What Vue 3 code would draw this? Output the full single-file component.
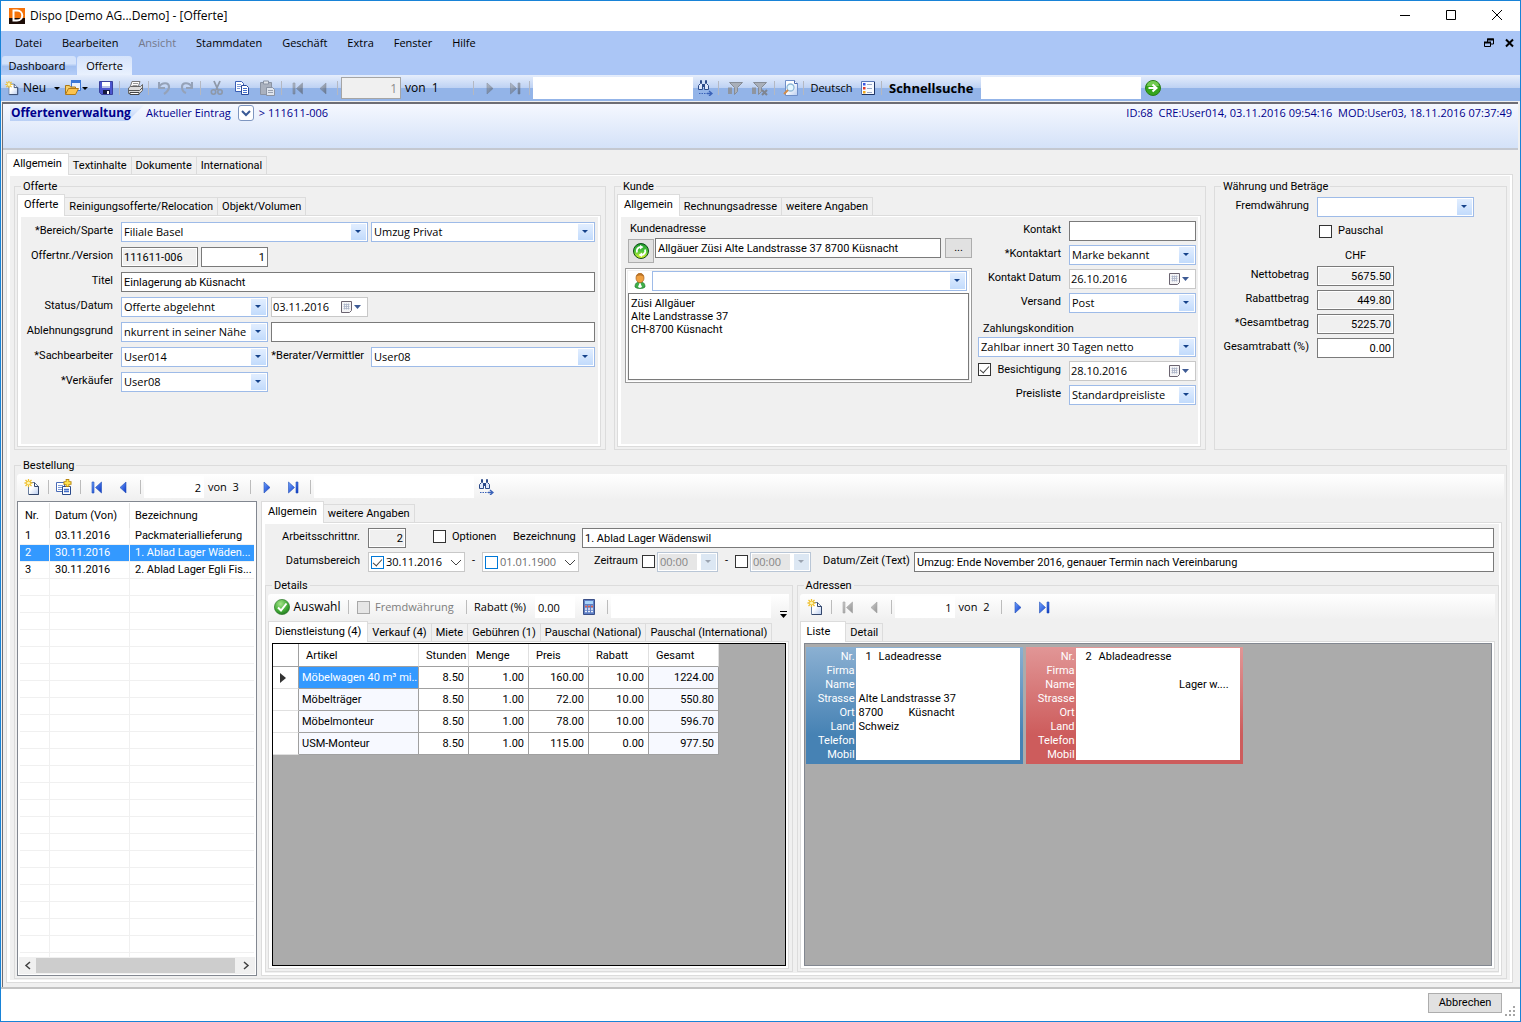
<script setup>
import { ref } from 'vue'

const menus = ['Datei', 'Bearbeiten', 'Ansicht', 'Stammdaten', 'Geschäft', 'Extra', 'Fenster', 'Hilfe']
const mainTabs = ['Allgemein', 'Textinhalte', 'Dokumente', 'International']
const offerTabs = ['Offerte', 'Reinigungsofferte/Relocation', 'Objekt/Volumen']
const customerTabs = ['Allgemein', 'Rechnungsadresse', 'weitere Angaben']
const orderTabs = ['Allgemein', 'weitere Angaben']
const detailTabs = ['Dienstleistung (4)', 'Verkauf (4)', 'Miete', 'Gebühren (1)', 'Pauschal (National)', 'Pauschal (International)']
const addressTabs = ['Liste', 'Detail']

const orders = [
  { nr: '1', date: '03.11.2016', name: 'Packmateriallieferung' },
  { nr: '2', date: '30.11.2016', name: '1. Ablad Lager Wäden...' },
  { nr: '3', date: '30.11.2016', name: '2. Ablad Lager Egli Fis...' },
]
const selectedOrder = ref('2')

const services = [
  ['Möbelwagen 40 m³ mi...', '8.50', '1.00', '160.00', '10.00', '1224.00'],
  ['Möbelträger', '8.50', '1.00', '72.00', '10.00', '550.80'],
  ['Möbelmonteur', '8.50', '1.00', '78.00', '10.00', '596.70'],
  ['USM-Monteur', '8.50', '1.00', '115.00', '0.00', '977.50'],
]

const amounts = [
  { id: 'netto', label: 'Nettobetrag', value: '5675.50', locked: true },
  { id: 'rabatt', label: 'Rabattbetrag', value: '449.80', locked: true },
  { id: 'gesamt', label: '*Gesamtbetrag', value: '5225.70', locked: true },
  { id: 'prozent', label: 'Gesamtrabatt (%)', value: '0.00', locked: false },
]

const addressLabels = ['Nr.', 'Firma', 'Name', 'Strasse', 'Ort', 'Land', 'Telefon', 'Mobil']
const addressText = 'Züsi Allgäuer\nAlte Landstrasse 37\nCH-8700 Küsnacht'
</script>

<template>
  <svg class="sprite" width="0" height="0" aria-hidden="true">
    <defs>
      <linearGradient id="g-page" x1="0" y1="0" x2="1" y2="1"><stop offset="0.4" stop-color="#fff" /><stop offset="1" stop-color="#b9cdf0" /></linearGradient>
      <linearGradient id="g-nav" x1="0" y1="0" x2="1" y2="1"><stop offset="0" stop-color="#6fa2ff" /><stop offset="1" stop-color="#0b35c4" /></linearGradient>
      <radialGradient id="g-green" cx="0.4" cy="0.3" r="0.8"><stop offset="0" stop-color="#a5e58a" /><stop offset="0.6" stop-color="#3fa834" /><stop offset="1" stop-color="#1d6b1c" /></radialGradient>
      <linearGradient id="g-lime" x1="0" y1="0" x2="0" y2="1"><stop offset="0" stop-color="#1d9a2e" /><stop offset="0.5" stop-color="#4cc43a" /><stop offset="1" stop-color="#e4f62a" /></linearGradient>
      <symbol id="i-new" viewBox="0 0 16 16">
        <path d="M4.500 3.500h6l4 4v8h-10z" fill="url(#g-page)" stroke="#6b7f9f" />
        <path d="M10.500 3.500v4h4v8H5" fill="none" stroke="#33466b" />
        <path d="M4.500 0v8M.5 4h8M1.500 1l6 6M7.500 1l-6 6" stroke="#f0c02c" stroke-width="1.300" />
        <circle cx="4.500" cy="4" r="1.600" fill="#fff7b0" />
      </symbol>
      <symbol id="i-open" viewBox="0 0 16 16">
        <path d="M6.500.5h9v10h-9z" fill="#eaf2ff" stroke="#3b78d8" /><path d="M6 0h10v3H6z" fill="#3b78d8" />
        <path d="M.5 14V5.500h4l1 1.500h5v3" fill="#f6cf6a" stroke="#a97616" />
        <path d="M.5 14.500l3-6h10l-3 6z" fill="#fbc34e" stroke="#b27a18" />
      </symbol>
      <symbol id="i-save" viewBox="0 0 16 16">
        <path d="M1.500 1.500h13v13h-11l-2-2z" fill="#4b55cf" stroke="#3a409c" />
        <path d="M4 2h8v6H4z" fill="#fff" /><path d="M4 6h8v2H4z" fill="#b9c2e6" />
        <path d="M5 10h7v4H5z" fill="#15183f" /><path d="M9 11h2v3H9z" fill="#fff" />
      </symbol>
      <symbol id="i-print" viewBox="0 0 16 16">
        <path d="M5 1.500h8l-2 6H3z" fill="#fff" stroke="#777" />
        <path d="M6 3.500h5M5.500 5.500h5" stroke="#999" />
        <path d="M1.500 8l2-1.500h10l2-2v6l-3 3h-11z" fill="#dcdcdc" stroke="#666" />
        <path d="M1.500 10.500h11l3-3" fill="none" stroke="#555" /><path d="M3 12.500h9v2H3z" fill="#fff" stroke="#444" />
      </symbol>
      <symbol id="i-undo" viewBox="0 0 16 16">
        <path d="M3 2v6h6" fill="none" stroke="#95a2b8" stroke-width="2" /><path d="M3 7c3-5 10-5 10 0 0 3-2 5-5 7" fill="none" stroke="#95a2b8" stroke-width="2.200" />
      </symbol>
      <symbol id="i-redo" viewBox="0 0 16 16">
        <path d="M13 2v6H7" fill="none" stroke="#95a2b8" stroke-width="2" /><path d="M13 7C10 2 3 2 3 7c0 3 1 5 4 6" fill="none" stroke="#95a2b8" stroke-width="2.200" />
      </symbol>
      <symbol id="i-cut" viewBox="0 0 16 16">
        <path d="M5 1l4 9M11 1L7 10" stroke="#8e98a8" stroke-width="1.800" fill="none" />
        <circle cx="4.500" cy="12" r="2.200" fill="none" stroke="#8e98a8" stroke-width="1.600" /><circle cx="11" cy="12" r="2.200" fill="none" stroke="#8e98a8" stroke-width="1.600" />
      </symbol>
      <symbol id="i-copy" viewBox="0 0 16 16">
        <path d="M1.500 1.500h6l2 2v8h-8z" fill="#fff" stroke="#3a5fb5" /><path d="M3 4.500h4M3 6.500h4M3 8.500h3" stroke="#7e9bd8" />
        <path d="M7.500 5.500h5l2 2v7h-7z" fill="#fff" stroke="#2a4a9b" /><path d="M9 8.500h4M9 10.500h4M9 12.500h4" stroke="#4470cc" />
      </symbol>
      <symbol id="i-paste" viewBox="0 0 16 16">
        <path d="M1.500 2.500h11v12h-11z" fill="#aab1be" stroke="#8a93a3" /><path d="M4.500 1h5v3h-5z" fill="#e0e4ea" stroke="#8a93a3" />
        <path d="M7.500 7.500h6l2 2v6h-8z" fill="#dfe5ee" stroke="#8a93a3" /><path d="M9 10.500h5M9 12.500h5" stroke="#98a1b1" />
      </symbol>
      <symbol id="i-copyadd" viewBox="0 0 16 16">
        <path d="M.5 3.500h8v9h-8z" fill="#fff" stroke="#4a6cb8" /><path d="M2 6.500h5M2 8.500h5M2 10.500h5" stroke="#7e9bd8" />
        <path d="M6.500 7.500h8v8h-8z" fill="#fff" stroke="#2a4a8b" /><path d="M8 10.500h5M8 12.500h5" stroke="#4470cc" stroke-width="1.500" />
        <path d="M11.500 0v8M7.500 4h8" stroke="#b8860b" stroke-width="3.600" /><path d="M11.500 1v6M8.500 4h6" stroke="#ffe14d" stroke-width="2" />
      </symbol>
      <symbol id="i-first" viewBox="0 0 16 16"><path d="M3 3h2v11H3zM12.500 3v11L6.500 8.500z" fill="url(#g-nav)" stroke="#2450b8" stroke-width=".6" /></symbol>
      <symbol id="i-prev" viewBox="0 0 16 16"><path d="M11 3v11L5 8.500z" fill="url(#g-nav)" stroke="#2450b8" stroke-width=".6" /></symbol>
      <symbol id="i-next" viewBox="0 0 16 16"><path d="M5 3v11l6-5.500z" fill="url(#g-nav)" stroke="#2450b8" stroke-width=".6" /></symbol>
      <symbol id="i-last" viewBox="0 0 16 16"><path d="M3.500 3v11l6-5.500zM11 3h2v11h-2z" fill="url(#g-nav)" stroke="#2450b8" stroke-width=".6" /></symbol>
      <symbol id="i-find" viewBox="0 0 16 16">
        <path d="M3.500.5h1v3l1 1v5h-4v-4l2-2zM8.500.5h1v3l2 2v4h-4v-5l1-1z" fill="#dfe8fb" stroke="#2c4a88" />
        <path d="M5 4h3v3H5z" fill="#2c4a88" /><path d="M2 13.500h8" stroke="#3a62b8" stroke-width="1.200" stroke-dasharray="1.500 1" /><path d="M10 13.500h5M12 11l3 2.500-3 2.500" fill="none" stroke="#3a62b8" stroke-width="1.400" />
      </symbol>
      <symbol id="i-filter" viewBox="0 0 16 16">
        <path d="M2.500 2.500h13l-5 5v4l-3 3V7.500z" fill="#a9afb9" stroke="#868c96" /><path d="M1 7.500h4V14H1z" fill="#8f959f" />
      </symbol>
      <symbol id="i-filterx" viewBox="0 0 16 16">
        <path d="M1.500 2.500h13l-5 5v4l-3 3V7.500z" fill="#a9afb9" stroke="#868c96" /><path d="M0 7.500h4V14H0z" fill="#8f959f" /><path d="M10 10l5 5M15 10l-5 5" stroke="#7f8590" stroke-width="2" />
      </symbol>
      <symbol id="i-preview" viewBox="0 0 16 16">
        <path d="M3.500.5h9l3 3v12h-12z" fill="url(#g-page)" stroke="#6f8fc8" /><path d="M12.500.5v3h3" fill="#fff" stroke="#4a6ab0" />
        <circle cx="8.500" cy="7.500" r="3.500" fill="#e5f7ff" stroke="#8fb8d8" stroke-width="1.300" /><path d="M6 10l-4 4" stroke="#d08b4a" stroke-width="2" />
      </symbol>
      <symbol id="i-list" viewBox="0 0 16 16">
        <path d="M1.500 1.500h13v13h-13z" fill="#f7faff" stroke="#5b78b8" /><path d="M14.500 2v12.500H2" fill="none" stroke="#1f3566" />
        <path d="M3 3h2.500v2.500H3z" fill="#3b55e0" /><path d="M3 7h2.500v2.500H3z" fill="#e03b2a" /><path d="M3 11h2.500v2.500H3z" fill="#f0a81c" />
        <path d="M7 4.500h5M7 8.500h5M7 12.500h5" stroke="#9aa9c8" />
      </symbol>
      <symbol id="i-go" viewBox="0 0 16 16">
        <circle cx="8" cy="8" r="7.500" fill="#35a51c" stroke="#2a7d18" /><path d="M2 6a6 5 0 0 1 12 0z" fill="#8fdc6a" opacity=".7" />
        <path d="M3.500 8h7M7.500 4.500L11.500 8l-4 3.500" fill="none" stroke="#fff" stroke-width="2" />
      </symbol>
      <symbol id="i-refresh" viewBox="0 0 16 16">
        <circle cx="8" cy="8" r="7.500" fill="url(#g-lime)" stroke="#0d4d18" />
        <path d="M4 9.500c-1-3 1-5.500 4-5.500M12 6.500c1 3-1 5.500-4 5.500" fill="none" stroke="#fff" stroke-width="1.800" /><path d="M7 2l3.500 2L7 6.500zM9 9.500L5.500 12 9 14z" fill="#fff" />
      </symbol>
      <symbol id="i-person" viewBox="0 0 16 16">
        <path d="M3 14c0-4 2-5 5-5s5 1 5 5c-2 2-8 2-10 0z" fill="#3fae49" stroke="#1e7a2b" stroke-width=".7" />
        <path d="M8 9l2 5-2 1-2-1z" fill="#fff" /><ellipse cx="8" cy="5" rx="4" ry="4.700" fill="#f0a040" stroke="#a8601c" stroke-width=".7" /><path d="M4 4c0-5 8-5 8 0-2-2-6-2-8 0z" fill="#b8742a" />
      </symbol>
      <symbol id="i-ok" viewBox="0 0 16 16">
        <circle cx="8" cy="8" r="7.600" fill="url(#g-green)" stroke="#2f7a2c" stroke-width=".7" /><path d="M4 8.500l3 3 5.500-7" fill="none" stroke="#fff" stroke-width="2" />
      </symbol>
      <symbol id="i-calc" viewBox="0 0 16 16">
        <path d="M2.500.5h11v15h-11z" fill="#5f7fc4" stroke="#3a4f88" /><path d="M4 2h8v3H4z" fill="#a8d4fa" />
        <path d="M4 7.500h8M4 10h8M4 12.500h8" stroke="#e8eefb" stroke-width="1.600" stroke-dasharray="2 1" /><path d="M4 7.500h8" stroke="#e0604a" stroke-width="1.600" stroke-dasharray="2 1" />
      </symbol>
      <symbol id="i-calendar" viewBox="0 0 20 14">
        <path d="M.5.500h10v9l-2 2h-8z" fill="#f4f4f6" stroke="#6b6470" /><path d="M2.500 3.500h6M2.500 5.500h6M2.500 7.500h6M3.500 2.500v6M5.500 2.500v6M7.500 2.500v6" stroke="#a9b3c6" stroke-width=".8" />
        <path d="M13 4h7l-3.500 4z" fill="#3d5a94" />
      </symbol>
    </defs>
  </svg>

  <div class="window">
    <header class="titlebar">
      <svg class="logo" width="16" height="16" viewBox="0 0 16 16" aria-hidden="true">
        <path d="M0 0h16v10H0z" fill="#f5730a" /><path d="M0 10h16v6H0z" fill="#1c0c06" />
        <path d="M4.500 2.500h3.500c7 0 7 10 0 10H4.500z" fill="none" stroke="#fff" stroke-width="2" />
      </svg>
      <h1>Dispo [Demo AG...Demo] - [Offerte]</h1>
      <div class="winbtns">
        <button aria-label="Minimieren"><svg width="12" height="12"><path d="M1 5.500h10" stroke="#000" /></svg></button>
        <button aria-label="Maximieren"><svg width="12" height="12"><path d="M1.500.5h9v9h-9z" fill="none" stroke="#000" /></svg></button>
        <button aria-label="Schliessen"><svg width="12" height="12"><path d="M1 0l10 10M11 0L1 10" stroke="#000" /></svg></button>
      </div>
    </header>

    <nav class="menubar">
      <button v-for="m in menus" :key="m" :disabled="m === 'Ansicht'">{{ m }}</button>
      <div class="mdi">
        <button aria-label="Wiederherstellen"><svg width="10" height="10"><path d="M3.500 4V1h6v5H7M.5 4.500h6v4h-6z" fill="none" stroke="#000" /><path d="M3 1.500h7M0 4.500h7" stroke="#000" stroke-width="2" /></svg></button>
        <button aria-label="Fenster schliessen"><svg width="10" height="10"><path d="M1 1.500l7 7M8 1.500l-7 7" stroke="#000" stroke-width="2" /></svg></button>
      </div>
    </nav>

    <div class="doctabs">
      <button>Dashboard</button><button class="on">Offerte</button>
    </div>

    <div class="toolbar main">
      <button class="new"><svg class="ico"><use href="#i-new" /></svg><span>Neu</span><i class="caret"></i></button>
      <button class="open" aria-label="Öffnen"><svg class="ico"><use href="#i-open" /></svg><i class="caret"></i></button>
      <button class="tb" aria-label="Speichern"><svg class="ico"><use href="#i-save" /></svg></button><i class="sep"></i>
      <button class="tb" aria-label="Drucken"><svg class="ico"><use href="#i-print" /></svg></button><i class="sep"></i>
      <button class="tb" aria-label="Rückgängig" disabled><svg class="ico"><use href="#i-undo" /></svg></button>
      <button class="tb" aria-label="Wiederholen" disabled><svg class="ico"><use href="#i-redo" /></svg></button><i class="sep"></i>
      <button class="nav" aria-label="Ausschneiden" disabled><svg class="ico"><use href="#i-cut" /></svg></button>
      <button class="nav" aria-label="Kopieren"><svg class="ico"><use href="#i-copy" /></svg></button>
      <button class="nav" aria-label="Einfügen" disabled><svg class="ico"><use href="#i-paste" /></svg></button><i class="sep"></i>
      <button class="nav off" aria-label="Erster" disabled><svg class="ico"><use href="#i-first" /></svg></button>
      <button class="nav off" aria-label="Zurück" disabled><svg class="ico"><use href="#i-prev" /></svg></button><i class="sep"></i>
      <input class="pos locked" value="1" aria-label="Position" disabled><span class="of">von&nbsp; 1</span><i class="sep"></i>
      <button class="nav off" aria-label="Weiter" disabled><svg class="ico"><use href="#i-next" /></svg></button>
      <button class="nav off" aria-label="Letzter" disabled><svg class="ico"><use href="#i-last" /></svg></button><i class="sep"></i>
      <input class="search" aria-label="Suchtext">
      <button class="tb" aria-label="Suchen"><svg class="ico"><use href="#i-find" /></svg></button><i class="sep"></i>
      <button class="nav" aria-label="Filter" disabled><svg class="ico"><use href="#i-filter" /></svg></button>
      <button class="nav" aria-label="Filter entfernen" disabled><svg class="ico"><use href="#i-filterx" /></svg></button><i class="sep"></i>
      <button class="tb" aria-label="Vorschau"><svg class="ico"><use href="#i-preview" /></svg></button><i class="sep"></i>
      <button class="lang">Deutsch</button>
      <button class="tb" aria-label="Liste"><svg class="ico"><use href="#i-list" /></svg></button><i class="sep"></i>
      <label class="quick" for="quick">Schnellsuche</label>
      <input id="quick" class="search">
      <button class="tb" aria-label="Los"><svg class="ico"><use href="#i-go" /></svg></button>
    </div>

    <main class="child">
      <div class="crumbs">
        <h2>Offertenverwaltung</h2>
        <span>Aktueller Eintrag</span>
        <button aria-label="Eintrag wählen"><svg width="10" height="8"><path d="M1 2l4 4 4-4" fill="none" stroke="#3a5a96" stroke-width="2" /></svg></button>
        <span>&gt;&nbsp;111611-006</span>
        <span class="meta">ID:68&nbsp; CRE:User014, 03.11.2016 09:54:16&nbsp; MOD:User03, 18.11.2016 07:37:49</span>
      </div>

      <section class="outer">
        <div class="tabs"><button v-for="(t, i) in mainTabs" :key="t" :class="{ on: i === 0 }">{{ t }}</button></div>
        <div class="page"><div class="pane body">
          <div class="groups">
            <fieldset>
              <legend>Offerte</legend>
              <div class="tabctl">
                <div class="tabs"><button v-for="(t, i) in offerTabs" :key="t" :class="{ on: i === 0 }">{{ t }}</button></div>
                <div class="page"><div class="pane offer">
                  <div class="row"><label for="bereich">*Bereich/Sparte</label><span class="combo c247"><select id="bereich"><option>Filiale Basel</option></select></span><span class="combo grow"><select aria-label="Sparte"><option>Umzug Privat</option></select></span></div>
                  <div class="row"><label for="offertnr">Offertnr./Version</label><input id="offertnr" class="txt locked c77" value="111611-006" readonly><input class="txt num c67" value="1" aria-label="Version"></div>
                  <div class="row"><label for="titel">Titel</label><input id="titel" class="txt grow" value="Einlagerung ab Küsnacht"></div>
                  <div class="row"><label for="status">Status/Datum</label><span class="combo c147"><select id="status"><option>Offerte abgelehnt</option></select></span><span class="date c97"><input value="03.11.2016" aria-label="Datum"><svg width="20" height="14"><use href="#i-calendar" /></svg></span></div>
                  <div class="row"><label for="grund">Ablehnungsgrund</label><span class="combo c147"><select id="grund"><option>nkurrent in seiner Nähe</option></select></span><input class="txt grow" aria-label="Grund Text"></div>
                  <div class="row"><label for="sach">*Sachbearbeiter</label><span class="combo c147"><select id="sach"><option>User014</option></select></span><label class="second" for="berater">*Berater/Vermittler</label><span class="combo grow"><select id="berater"><option>User08</option></select></span></div>
                  <div class="row"><label for="verk">*Verkäufer</label><span class="combo c147"><select id="verk"><option>User08</option></select></span></div>
                </div></div>
              </div>
            </fieldset>

            <fieldset>
              <legend>Kunde</legend>
              <div class="tabctl">
                <div class="tabs"><button v-for="(t, i) in customerTabs" :key="t" :class="{ on: i === 0 }">{{ t }}</button></div>
                <div class="page"><div class="pane customer">
                  <div class="address">
                    <label for="kadr">Kundenadresse</label>
                    <div class="adrline">
                      <button class="push refresh" aria-label="Aktualisieren"><svg class="ico"><use href="#i-refresh" /></svg></button>
                      <input id="kadr" class="txt grow" value="Allgäuer Züsi Alte Landstrasse 37 8700 Küsnacht">
                      <button class="push dots">...</button>
                    </div>
                    <div class="adrbox">
                      <div class="adrpick"><svg class="ico"><use href="#i-person" /></svg><span class="combo grow"><select aria-label="Person"><option></option></select></span></div>
                      <textarea aria-label="Adresse" :value="addressText"></textarea>
                    </div>
                  </div>
                  <div class="contact">
                    <div class="row"><label for="kontakt">Kontakt</label><input id="kontakt" class="txt c127"></div>
                    <div class="row"><label for="kart">*Kontaktart</label><span class="combo c127"><select id="kart"><option>Marke bekannt</option></select></span></div>
                    <div class="row"><label for="kdat">Kontakt Datum</label><span class="date c127"><input id="kdat" value="26.10.2016"><svg width="20" height="14"><use href="#i-calendar" /></svg></span></div>
                    <div class="row"><label for="vers">Versand</label><span class="combo c127"><select id="vers"><option>Post</option></select></span></div>
                    <div class="terms"><label for="zahl">Zahlungskondition</label><span class="combo"><select id="zahl"><option>Zahlbar innert 30 Tagen netto</option></select></span></div>
                    <div class="row"><label class="check"><input type="checkbox" checked>Besichtigung</label><span class="date c127"><input value="28.10.2016" aria-label="Besichtigung Datum"><svg width="20" height="14"><use href="#i-calendar" /></svg></span></div>
                    <div class="row"><label for="preis">Preisliste</label><span class="combo c127"><select id="preis"><option>Standardpreisliste</option></select></span></div>
                  </div>
                </div></div>
              </div>
            </fieldset>

            <fieldset>
              <legend>Währung und Beträge</legend>
              <div class="money">
                <div class="row"><label for="fw">Fremdwährung</label><span class="combo c157"><select id="fw"><option></option></select></span></div>
                <label class="check flat"><input type="checkbox">Pauschal</label>
                <div class="chf">CHF</div>
                <div v-for="a in amounts" :key="a.id" class="row"><label :for="a.id">{{ a.label }}</label><input :id="a.id" class="txt num c77" :class="{ locked: a.locked }" :value="a.value" :readonly="a.locked"></div>
              </div>
            </fieldset>
          </div>

          <fieldset class="orders">
            <legend>Bestellung</legend>
            <div class="toolbar light">
              <button class="tb" aria-label="Neu"><svg class="ico"><use href="#i-new" /></svg></button><i class="sep"></i>
              <button class="tb" aria-label="Kopie anlegen"><svg class="ico"><use href="#i-copyadd" /></svg></button><i class="sep"></i>
              <button class="nav" aria-label="Erste"><svg class="ico"><use href="#i-first" /></svg></button>
              <button class="nav" aria-label="Vorige"><svg class="ico"><use href="#i-prev" /></svg></button><i class="sep"></i>
              <input class="pos" value="2" aria-label="Position"><span class="of">von&nbsp; 3</span><i class="sep"></i>
              <button class="nav" aria-label="Nächste"><svg class="ico"><use href="#i-next" /></svg></button>
              <button class="nav" aria-label="Letzte"><svg class="ico"><use href="#i-last" /></svg></button><i class="sep"></i>
              <input class="search" aria-label="Suchtext">
              <button class="tb" aria-label="Suchen"><svg class="ico"><use href="#i-find" /></svg></button>
            </div>

            <div class="split">
              <div class="list">
                <div class="listbody">
                  <table>
                    <thead><tr><th>Nr.</th><th>Datum (Von)</th><th>Bezeichnung</th></tr></thead>
                    <tbody>
                      <tr v-for="o in orders" :key="o.nr" :class="{ sel: o.nr === selectedOrder }" @click="selectedOrder = o.nr"><td>{{ o.nr }}</td><td>{{ o.date }}</td><td>{{ o.name }}</td></tr>
                    </tbody>
                  </table>
                  <div class="fill"><i></i><i></i><i></i></div>
                </div>
                <div class="hscroll">
                  <svg width="17" height="17"><path d="M11 5L7 8.500l4 3.500" fill="none" stroke="#404040" stroke-width="1.500" /></svg><i></i><svg width="17" height="17"><path d="M6 5l4 3.500L6 12" fill="none" stroke="#404040" stroke-width="1.500" /></svg>
                </div>
              </div>

              <div class="tabctl">
                <div class="tabs"><button v-for="(t, i) in orderTabs" :key="t" :class="{ on: i === 0 }">{{ t }}</button></div>
                <div class="page"><div class="pane step">
                  <div class="row first">
                    <label for="anr">Arbeitsschrittnr.</label><input id="anr" class="txt num locked c37" value="2" readonly>
                    <label class="check opt"><input type="checkbox">Optionen</label>
                    <label class="inline" for="bez">Bezeichnung</label><input id="bez" class="txt grow" value="1. Ablad Lager Wädenswil">
                  </div>
                  <div class="row">
                    <label for="dvon">Datumsbereich</label>
                    <span class="date win c97"><input type="checkbox" checked aria-label="Von aktiv"><input id="dvon" value="30.11.2016"><svg width="12" height="8"><path d="M1 1l5 5 5-5" fill="none" stroke="#444" /></svg></span>
                    <span class="dash">-</span>
                    <span class="date win c97 dim"><input type="checkbox" aria-label="Bis aktiv"><input value="01.01.1900" aria-label="Bis"><svg width="12" height="8"><path d="M1 1l5 5 5-5" fill="none" stroke="#444" /></svg></span>
                    <span class="lbl period">Zeitraum</span>
                    <input type="checkbox" aria-label="Zeit von aktiv"><span class="combo time"><select disabled aria-label="Zeit von"><option>00:00</option></select></span>
                    <span class="dash">-</span>
                    <input type="checkbox" aria-label="Zeit bis aktiv"><span class="combo time"><select disabled aria-label="Zeit bis"><option>00:00</option></select></span>
                    <label class="inline2" for="dzt">Datum/Zeit (Text)</label><input id="dzt" class="txt grow" value="Umzug: Ende November 2016, genauer Termin nach Vereinbarung">
                  </div>

                  <div class="lower">
                    <fieldset>
                      <legend>Details</legend>
                      <div class="toolbar light details">
                        <button class="auswahl"><svg class="ico"><use href="#i-ok" /></svg>Auswahl</button><i class="sep"></i>
                        <label class="fw"><input type="checkbox" disabled>Fremdwährung</label><i class="sep"></i>
                        <label class="rab" for="rab">Rabatt (%)</label><input id="rab" class="rabin" value="0.00">
                        <button class="tb" aria-label="Rechner"><svg class="ico"><use href="#i-calc" /></svg></button><i class="sep"></i>
                        <input class="search" aria-label="Artikelsuche">
                        <button class="more" aria-label="Weitere Optionen"><svg width="9" height="9"><path d="M1 1.500h7" stroke="#000" /><path d="M1 4h7L4.500 8z" /></svg></button>
                      </div>
                      <div class="tabctl">
                        <div class="tabs"><button v-for="(t, i) in detailTabs" :key="t" :class="{ on: i === 0 }">{{ t }}</button></div>
                        <div class="page"><div class="grid black">
                          <table class="data">
                            <thead><tr><th class="rh"></th><th class="art">Artikel</th><th class="std">Stunden</th><th>Menge</th><th>Preis</th><th>Rabatt</th><th class="sum">Gesamt</th></tr></thead>
                            <tbody>
                              <tr v-for="(s, r) in services" :key="s[0]">
                                <td class="rh"><svg v-if="r === 0" width="6" height="10"><path d="M0 0l6 5-6 5z" fill="#333" /></svg></td>
                                <td v-for="(v, c) in s" :key="c" :class="{ art: c === 0, sum: c === 5, cur: r === 0 && c === 0 }">{{ v }}</td>
                              </tr>
                            </tbody>
                          </table>
                        </div></div>
                      </div>
                    </fieldset>

                    <fieldset>
                      <legend>Adressen</legend>
                      <div class="toolbar light">
                        <button class="tb" aria-label="Neu"><svg class="ico"><use href="#i-new" /></svg></button><i class="sep"></i>
                        <button class="nav off" aria-label="Erste" disabled><svg class="ico"><use href="#i-first" /></svg></button>
                        <button class="nav off" aria-label="Vorige" disabled><svg class="ico"><use href="#i-prev" /></svg></button><i class="sep"></i>
                        <input class="pos" value="1" aria-label="Position"><span class="of">von&nbsp; 2</span><i class="sep"></i>
                        <button class="nav" aria-label="Nächste"><svg class="ico"><use href="#i-next" /></svg></button>
                        <button class="nav" aria-label="Letzte"><svg class="ico"><use href="#i-last" /></svg></button>
                      </div>
                      <div class="tabctl">
                        <div class="tabs"><button v-for="(t, i) in addressTabs" :key="t" :class="{ on: i === 0, wide: i === 0 }">{{ t }}</button></div>
                        <div class="page"><div class="grid cards">
                          <article class="card blue">
                            <ul><li v-for="l in addressLabels" :key="l">{{ l }}</li></ul>
                            <div class="cardbody">
                              <p class="kind"><b>1</b>Ladeadresse</p><p></p><p></p><p>Alte Landstrasse 37</p><p class="city"><b>8700</b>Küsnacht</p><p>Schweiz</p>
                            </div>
                          </article>
                          <article class="card red">
                            <ul><li v-for="l in addressLabels" :key="l">{{ l }}</li></ul>
                            <div class="cardbody">
                              <p class="kind"><b>2</b>Abladeadresse</p><p></p><p class="end">Lager w....</p>
                            </div>
                          </article>
                        </div></div>
                      </div>
                    </fieldset>
                  </div>
                </div></div>
              </div>
            </div>
          </fieldset>
        </div></div>
      </section>
    </main>

    <footer class="footer">
      <button class="push cancel">Abbrechen</button>
      <svg width="11" height="11" aria-hidden="true"><path d="M8 0h2v2H8zM4 4h2v2H4zM8 4h2v2H8zM0 8h2v2H0zM4 8h2v2H4zM8 8h2v2H8z" fill="#a5a5a5" /></svg>
    </footer>
  </div>
</template>

<style>
body { background: #f0f0f0; }
</style>

<style scoped>
.window {
  --ui: Roboto, "Liberation Sans", sans-serif;
  --sys: "Open Sans", "Noto Sans", sans-serif;
  --line: #dcdcdc;
  --edge: #7a7a7a;
  display: flex; flex-direction: column; min-height: 100vh;
  border: 1px solid #1883d7; background: #f0f0f0; color: #000;
  font: 11px/16px var(--ui);
}
.window, .window * { box-sizing: border-box; }
.sprite { position: absolute; }
button, input, select, textarea { font: inherit; color: inherit; margin: 0; padding: 0; border: 0; border-radius: 0; background: none; outline: 0; }
input { min-width: 0; }
h1, h2, p, ul { margin: 0; padding: 0; font: inherit; list-style: none; }
svg { display: block; flex: none; }
.ico { width: 16px; height: 16px; }
.grow { flex: 1; }

.titlebar { display: flex; align-items: center; height: 30px; padding-left: 8px; background: #fff; font: 12px/16px var(--sys); }
.titlebar h1 { margin-left: 5px; }
.winbtns { display: flex; margin-left: auto; }
.winbtns button { display: grid; place-items: center; width: 46px; height: 28px; }
.menubar { display: flex; align-items: center; height: 25px; padding: 0 0 2px 4px; background: #abc6f6; font: 11px/16px var(--sys); }
.menubar button { padding: 0 10px; }
.menubar button:disabled { color: #75798a; }
.mdi { display: flex; margin-left: auto; padding-right: 5px; gap: 11px; }
.mdi button { padding: 0; }
.doctabs { display: flex; gap: 1px; height: 19px; padding-left: 1px; background: #abc6f6; font: 11px/17px var(--sys); }
.doctabs button { width: 74px; padding-right: 4px; border-radius: 3px 3px 0 0; background: linear-gradient(#d3e2fb 0 40%, #a3c0f0 55%, #b4cdf8); }
.doctabs button.on { width: 55px; padding: 0; background: linear-gradient(#d5e3fb, #e9f1fe); }

.toolbar { display: flex; align-items: center; height: 26px; }
.toolbar > * { flex: none; }
.toolbar button { display: flex; align-items: center; justify-content: center; height: 22px; }
.toolbar.main { padding-left: 4px; background: linear-gradient(#e6eefc, #bdd1f3 50%, #93b4e8 51%, #93b4e8); font: 12px/16px var(--sys); }
.tb { width: 24px; }
.nav { width: 25px; }
.light .nav { width: 26px; }
.nav.off .ico { filter: grayscale(1) opacity(0.5); }
.sep { width: 1px; height: 14px; margin: 0 3px 0 2px; background: #b4b8c2; }
.light .sep { margin: 0 3px 0 4px; background: #bcbcbc; }
.caret { border: 3px solid transparent; border-top: 3px solid #000; border-bottom: 0; }
.toolbar .new { gap: 4px; width: 55px; }
.toolbar .new .ico { width: 14px; }
.toolbar .new .caret { margin-left: 4px; }
.toolbar .open { width: 32px; gap: 1px; justify-content: flex-start; margin-left: 2px; padding-left: 3px; }
.toolbar.main .tb { width: 23px; }
.pos, .search { height: 22px; background: #fff; font: 12px/16px var(--sys); }
.pos { width: 60px; padding-right: 3px; text-align: right; }
.pos.locked { border: 1px solid #a5a5a5; color: #8d8d8d; }
.search { width: 160px; }
.of { width: 70px; padding-left: 4px; }
.light .of { width: 42px; }
.lang { width: 49px; font: 11px/16px var(--sys); }
.quick { width: 96px; padding-left: 4px; font: bold 13px/16px var(--sys); }
.light { padding-left: 3px; border-radius: 3px 0 0; background: linear-gradient(#fff, #f0f0f0); font: 11px/16px var(--sys); }
.light .pos { font-size: 11px; }

.child { display: flex; flex: 1; flex-direction: column; border-top: 2px solid #6d6d75; border-left: 1px solid #6d6d75; margin: 1px 2px 0 1px; }
.crumbs { display: flex; align-items: flex-start; height: 46px; padding: 1px 6px 0 7px; border-bottom: 2px solid #c4c8d0; background: linear-gradient(#f5f8ff, #d4e2f8); color: #00008b; font: 11px/16px var(--sys); }
.crumbs h2 { width: 134px; padding-left: 1px; background: linear-gradient(#eef4ff, #b9cff5); clip-path: polygon(0 0, 100% 0, 88% 100%, 0 100%); font: bold 12px/16px var(--sys); }
.crumbs span { margin-left: 2px; }
.crumbs button { display: grid; place-items: center; width: 16px; height: 16px; margin: 0 3px 0 7px; border: 1px solid #7e96c0; border-radius: 3px; background: #fff; }
.crumbs .meta { margin-left: auto; }

.outer { display: flex; flex: 1; flex-direction: column; margin: 3px 5px 4px 3px; }
.tabctl { display: flex; flex: 1; flex-direction: column; min-width: 0; }
.tabs { display: flex; align-items: flex-end; height: 21px; }
.tabs button { flex: none; height: 18px; padding: 0 4px; border: 1px solid var(--line); border-width: 1px 1px 0 0; background: #f0f0f0; line-height: 18px; white-space: nowrap; }
.tabs button.on { z-index: 1; height: 22px; margin-bottom: -1px; padding: 0 6px 1px; border-left-width: 1px; background: #fff; }
.tabs button.wide { padding-right: 15px; }
.page { display: flex; flex: 1; padding: 1px 2px 2px 3px; border: 1px solid var(--line); background: #fff; }
.pane { flex: 1; min-width: 0; background: #f0f0f0; }
.body { display: flex; flex-direction: column; padding: 2px 3px 1px 4px; }

fieldset { display: flex; flex-direction: column; min-width: 0; margin: 0; padding: 0 4px 2px 2px; border: 1px solid var(--line); }
legend { margin-left: 4px; padding: 1px 2px 0; line-height: 15px; }
.groups { display: grid; grid-template-columns: 592fr 592fr 293fr; gap: 8px; height: 272px; }
.row { display: flex; gap: 3px; height: 20px; }
.row > * { flex: none; }
.row > .grow { flex: 1; }
.row > label, .lbl { line-height: 18px; white-space: nowrap; }
.row > label:first-child { margin-right: 5px; text-align: right; }

.txt { height: 20px; padding: 0 2px; border: 1px solid var(--edge); background: #fff; }
.locked, .txt.locked { background: #f0f0f0; }
.txt.locked { box-shadow: inset 0 0 0 1px #fff; }
.num { text-align: right; }
.combo { position: relative; display: block; height: 20px; border: 1px solid #9ebbe8; background: #fff; }
.combo select { display: block; width: 100%; height: 18px; padding: 0 18px 0 2px; appearance: none; font: 11px/16px var(--sys); }
.combo::before { content: ""; position: absolute; top: 1px; right: 1px; width: 15px; height: 16px; background: linear-gradient(#e2eeff, #c2dbfc); pointer-events: none; }
.combo::after { content: ""; position: absolute; top: 7px; right: 6px; border: 3px solid transparent; border-top-color: #15428b; border-bottom: 0; pointer-events: none; }
.date { display: flex; align-items: center; height: 20px; padding-right: 6px; border: 1px solid #c8c8c8; background: #fff; }
.date input { flex: 1; width: 0; padding-left: 1px; font: 11px/16px var(--sys); }
.date svg { margin-top: 2px; }
.c247 { width: 247px; } .c157 { width: 157px; } .c147 { width: 147px; } .c127 { width: 127px; }
.c97 { width: 97px; } .c77 { width: 77px; } .c67 { width: 67px; } .c37 { width: 38px; }

input[type="checkbox"] { position: relative; flex: none; width: 13px; height: 13px; border: 1px solid #333; background: #fff; appearance: none; }
input[type="checkbox"]:checked::after { content: ""; position: absolute; left: 3px; top: 0; width: 4px; height: 8px; border: solid #444; border-width: 0 1px 1px 0; transform: rotate(42deg); }

.offer { display: flex; flex-direction: column; gap: 5px; padding: 5px 3px 0 0; }
.offer .row > label:first-child { width: 92px; }
.offer .row .second { width: 97px; padding-right: 4px; text-align: right; }

.customer { display: flex; padding: 4px 2px 0 4px; }
.address { flex: 1; display: flex; flex-direction: column; }
.address > label { padding-left: 5px; }
.adrline { display: flex; height: 27px; padding: 1px 0 0 3px; }
.push { border: 1px solid #adadad; background: #e1e1e1; }
.refresh { display: grid; place-items: center; width: 26px; height: 24px; margin: 1px 1px 0 0; }
.dots { width: 27px; height: 20px; margin-left: 4px; }
.adrbox { display: flex; flex-direction: column; height: 115px; margin-top: 4px; padding: 2px; border: 1px solid #9a9a9a; background: #f0f0f0; box-shadow: inset 0 0 0 1px #fff; }
.adrpick { display: flex; align-items: center; gap: 4px; padding: 0 2px 2px 4px; background: #fff; }
.address textarea { flex: 1; padding: 3px 2px; border: 1px solid var(--edge); background: #fff; line-height: 13px; resize: none; }
.contact { display: flex; flex-direction: column; gap: 4px; width: 218px; margin-left: 6px; }
.contact .row { justify-content: flex-end; }
.terms { margin-top: 4px; }
.terms label { display: block; padding-left: 5px; }
.check { display: flex; align-items: flex-start; gap: 6px; }
.check input { margin-top: 2px; }
.contact .row .check { flex: 1; padding-left: 4px; }

.money { display: flex; flex-direction: column; gap: 4px; padding-top: 3px; }
.money .row > label:first-child { width: 92px; }
.flat { padding: 2px 0 0 102px; }
.chf { padding: 7px 0 0 128px; line-height: 12px; }

.orders { flex: 1; margin-top: 7px; padding: 0 2px 2px; }
.orders > .toolbar { margin: 1px 0; }
.split { display: flex; flex: 1; gap: 4px; padding-right: 2px; }
.list { display: flex; flex-direction: column; width: 240px; border: 1px solid #828790; background: #fff; padding: 1px; }
.listbody { display: flex; flex: 1; flex-direction: column; padding: 0 1px; overflow: hidden; }
table { border-collapse: separate; border-spacing: 0; table-layout: fixed; }
th { font-weight: inherit; text-align: left; }
.list table { width: 100%; }
.list th { height: 25px; padding: 0 0 0 5px; border-right: 1px solid #e5e5e5; }
.list th:nth-child(1) { width: 30px; }
.list th:nth-child(2), .fill i:nth-child(2) { width: 80px; }
.list th:nth-child(3) { border: 0; }
.list td { height: 17px; padding: 0 0 0 5px; border: 1px solid #f0f0f0; border-width: 0 1px 1px 0; line-height: 16px; white-space: nowrap; overflow: hidden; }
.list td:last-child, .fill i:last-child { border-right: 0; }
.sel td { background: #3399ff; color: #fff; }
.fill { display: flex; flex: 1; background: repeating-linear-gradient(#fff 0 16px, #f0f0f0 16px 17px); }
.fill i { border-right: 1px solid #f0f0f0; }
.fill i:first-child { width: 30px; }
.fill i:last-child { flex: 1; }
.hscroll { display: flex; height: 17px; background: #f0f0f0; }
.hscroll i { flex: 1; margin: 1px 3px 1px 0; background: #cdcdcd; }

.step { display: flex; flex-direction: column; gap: 4px; padding: 4px 0 1px; }
.step > .row { padding-right: 5px; }
.step > .row > label:first-child { width: 95px; }
.opt { width: 77px; margin-left: 24px; }
.inline { width: 63px; margin-right: 3px; }
.dash { width: 11px; line-height: 18px; text-align: center; }
.period { width: 45px; margin-left: 12px; }
.row > input[type="checkbox"] { margin-top: 3px; }
.inline2 { width: 85px; margin: 0 3px 0 9px; }
.win input[type="checkbox"] { flex: none; width: 13px; margin: 0 1px 0 2px; border-color: #0078d7; }
.win { padding-right: 2px; }
.dim { color: #6d6d6d; }
.time { width: 61px; margin-left: -1px; border-color: #b9c6d6; }
.time select { width: 38px; height: 16px; margin: 1px; padding: 0 1px; background: #e6e6e6; color: #858585; opacity: 1; }
.time::before { background: #dce7f3; }
.time::after { border-top-color: #9aa3b0; }
.lower { display: grid; flex: 1; grid-template-columns: 528fr 703fr; gap: 4px; margin-top: 1px; }
.lower .toolbar { margin: 1px 0; }
.lower .tabs { height: 20px; }
.lower .tabs button.on { height: 21px; }
.lower fieldset { padding: 0 3px 2px 2px; }

.auswahl { gap: 3px; width: 73px; font: 12px/16px var(--sys); }
.details .fw { display: flex; align-items: center; gap: 5px; width: 110px; padding-left: 5px; color: #7d7d7d; }
.fw input:disabled { border-color: #a8a8a8; background: #e6e6e6; }
.rab { width: 65px; padding-left: 4px; }
.rabin { width: 40px; height: 22px; padding-left: 3px; background: #fff; }
.details .tb { width: 28px; }
.toolbar .more { align-self: flex-end; width: 9px; height: 12px; margin-left: 8px; }

.grid { flex: 1; min-width: 0; border: 1px solid #828790; background: #ababab; overflow: hidden; }
.grid.black { border-color: #000; }
.data { width: 446px; background: #fff; }
.data th { width: 60px; height: 23px; padding: 2px 7px 0; border-right: 1px solid #e0e0e0; border-bottom: 1px solid #a0a0a0; }
.data td { height: 22px; padding: 1px 4px 0 0; border: 1px solid #a0a0a0; border-width: 0 1px 1px 0; text-align: right; white-space: nowrap; overflow: hidden; }
.data .rh { width: 26px; padding: 0 0 0 7px; border-right-color: #a0a0a0; }
.data td.rh { border-bottom-color: #e0e0e0; }
.data th.art { width: 120px; }
.data th.std { width: 50px; padding-right: 0; }
.data th.sum { width: 70px; }
.data td.art { padding: 1px 0 0 3px; background: #f7f9ff; text-align: left; }
.data td.sum { background: #f7f9ff; }
.data td.cur { background: #3399ff; color: #fff; }

.cards { display: flex; align-items: flex-start; gap: 3px; padding: 3px 1px; }
.card { display: flex; width: 217px; height: 117px; padding: 1px 3px 4px 0; }
.card.blue { background: linear-gradient(#8bb0d2, #4682b4 75%); }
.card.red { background: linear-gradient(#e19696, #cd5c5c 75%); }
.card ul { width: 50px; padding-right: 1px; color: #fff; text-align: right; }
.card li, .card p { height: 14px; line-height: 18px; white-space: nowrap; }
.cardbody { flex: 1; padding: 0 11px 0 3px; background: #fff; }
.card b { display: inline-block; font-weight: inherit; }
.kind b { width: 20px; padding-left: 7px; }
.city b { width: 50px; }
.end { text-align: right; }

.footer { display: flex; align-items: flex-start; height: 34px; padding: 4px 4px 0 0; border-top: 2px solid #c3c3c3; background: #fff; justify-content: flex-end; gap: 3px; }
.cancel { width: 74px; height: 20px; }
.footer svg { align-self: flex-end; margin-bottom: 4px; }
</style>
